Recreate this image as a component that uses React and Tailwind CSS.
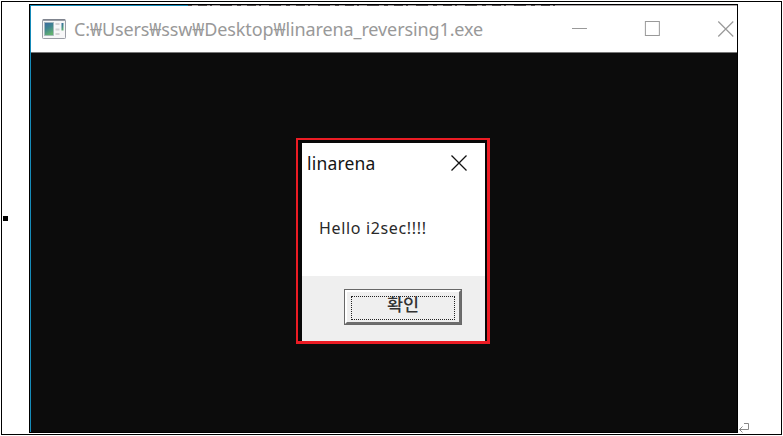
const FONT = "font-['Noto_Sans','Noto_Sans_CJK_KR',sans-serif]";

function ConsoleIcon() {
  return (
    <svg width="24" height="20" viewBox="0 0 24 20" className="block">
      <defs>
        <linearGradient id="pane" x1="0" y1="0" x2="0.4" y2="1">
          <stop offset="0" stopColor="#3c69a0" />
          <stop offset="0.5" stopColor="#3f8590" />
          <stop offset="1" stopColor="#62b070" />
        </linearGradient>
      </defs>
      <rect x="0.5" y="0.5" width="23" height="19" rx="0.8" fill="#f7f7f8" stroke="#9b9ea6" />
      <path d="M1 1h22" stroke="#737985" strokeWidth="1.4" />
      <rect x="2.5" y="3.5" width="9" height="13" fill="url(#pane)" stroke="#a5b7bd" strokeWidth="0.8" />
      <path d="M13.5 5h4M13.5 10.5h4M13.5 15h4" stroke="#d2d2d4" strokeWidth="1.8" />
      <rect x="19.5" y="4" width="2" height="7.5" fill="url(#pane)" />
    </svg>
  );
}

function TitleBar() {
  return (
    <div className="flex h-[47px] shrink-0 items-start border-b border-[#777] bg-white">
      <div className="ml-[11px] mt-[13px] w-8">
        <ConsoleIcon />
      </div>
      <div className={`mt-[9px] w-[489px] whitespace-nowrap text-[18px] leading-[28px] tracking-[-0.11px] text-[#999] ${FONT}`}>
        C:₩Users₩ssw₩Desktop₩linarena_reversing1.exe
      </div>
      <svg width="175" height="46" viewBox="0 0 175 46" fill="none" stroke="#999" className="block">
        <path d="M10 22.5h15" />
        <rect x="83.5" y="15.5" width="14" height="14" />
        <path d="M156.5 15.5l15 15M171.5 15.5l-15 15" strokeWidth="1.2" />
      </svg>
    </div>
  );
}

function MessageBox() {
  return (
    <div className="flex h-[206px] w-[194px] flex-col border-b-[3px] border-l-2 border-r-[3px] border-t-2 border-[#ec1c24] bg-[#080808] pl-1 pr-[2px] pt-[3px]">
      <div className="flex h-[133px] flex-col bg-white">
        <div className="flex h-[42px] items-start justify-between">
          <div className={`ml-[5px] mt-[7px] text-[17.5px] leading-[26px] tracking-[0.2px] text-[#151515] ${FONT}`}>linarena</div>
          <svg width="16" height="16" viewBox="0 0 16 16" fill="none" stroke="#111" strokeWidth="1.3" className="mr-[18px] mt-[12px] block">
            <path d="M.5.5l15 15M15.5.5l-15 15" />
          </svg>
        </div>
        <div className={`ml-[17px] mt-[31px] whitespace-nowrap text-[16px] leading-[24px] tracking-[0.65px] text-[#292929] ${FONT}`}>
          Hello i2sec!!!!
        </div>
      </div>
      <div className="flex h-[65px] items-start bg-[#efefef] pl-[42px] pt-[13px]">
        <div className="h-[36px] w-[118px] border border-[#686868] bg-[#efefef]">
          <div className="h-full border-2 border-b-[#6d6d6d] border-l-white border-r-[#6d6d6d] border-t-white px-[4px] py-[4px]">
            <div className="flex h-[24px] items-start justify-center border border-dotted border-[#222]">
              <span className="-mt-[5px] font-['Noto_Sans_CJK_KR',sans-serif] text-[17.5px] font-medium leading-[24px] text-[#333]">확인</span>
            </div>
          </div>
        </div>
      </div>
    </div>
  );
}

export default function App() {
  return (
    <div className="h-[436px] w-[783px] overflow-hidden bg-white pl-px pt-px">
      <div className="flex h-[434px] w-[781px] items-start border border-black">
        <div className="mt-[214px] w-[27px] shrink-0 pl-px">
          <div className="h-[5px] w-[5px] bg-black" />
        </div>
        <div className="mt-[2px] flex h-[429px] w-[709px] shrink-0 flex-col border border-black">
          <div className="flex h-px shrink-0">
            <div className="w-[158px] bg-[#168bb9]" />
            <svg width="549" height="1" viewBox="0 0 549 1" className="block">
              <path d="M0 0h549v1H0z" fill="#aaa5a8" />
              <path d="M0 .5h375" stroke="#4d484b" strokeDasharray="4 6 9 3 2 8 12 5" />
            </svg>
          </div>
          <div className="flex min-h-0 flex-1 flex-col border-l border-[#168bb9] bg-[#0c0c0c]">
            <TitleBar />
            <div className="pl-[265px] pt-[85px]">
              <MessageBox />
            </div>
          </div>
        </div>
        <svg width="11" height="12" viewBox="0 0 11 12" fill="none" stroke="#888" className="mt-[421px] block shrink-0">
          <path d="M6 .5h4.500v6H1.500M4.500 3.500l-3 3 3 3" />
        </svg>
      </div>
    </div>
  );
}
